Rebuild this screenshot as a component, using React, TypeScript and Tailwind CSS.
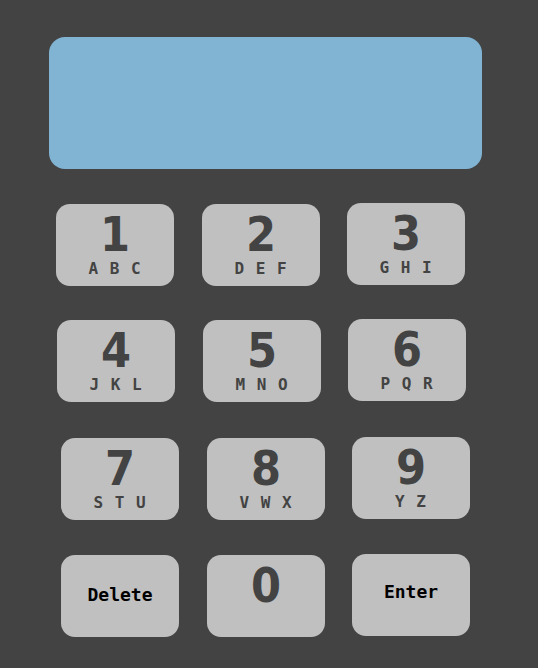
const keys = [
  [
    { digit: '1', letters: 'A B C' },
    { digit: '2', letters: 'D E F' },
    { digit: '3', letters: 'G H I' },
  ],
  [
    { digit: '4', letters: 'J K L' },
    { digit: '5', letters: 'M N O' },
    { digit: '6', letters: 'P Q R' },
  ],
  [
    { digit: '7', letters: 'S T U' },
    { digit: '8', letters: 'V W X' },
    { digit: '9', letters: 'Y Z' },
  ],
];

function Key({ digit, letters, last }: { digit: string; letters?: string; last?: boolean }) {
  return (
    <button
      className={`flex h-[82px] w-[118px] flex-col items-center rounded-[14px] bg-[#c0c0c0] pt-[6px] text-[#434343] ${last ? '-mt-px' : ''}`}
    >
      <span className="font-['DejaVu_Sans',sans-serif] text-[48px] font-bold leading-none font-stretch-condensed">{digit}</span>
      {letters && (
        <span className="mt-[3px] whitespace-pre text-[16px] font-bold leading-none tracking-[1px]">{letters}</span>
      )}
    </button>
  );
}

function ActionKey({ label, last }: { label: string; last?: boolean }) {
  return (
    <button
      className={`flex h-[82px] w-[118px] items-center justify-center rounded-[14px] bg-[#c0c0c0] pb-1 text-[18px] font-bold text-black ${last ? '-mt-px pb-[7px]' : ''}`}
    >
      {label}
    </button>
  );
}

export default function App() {
  return (
    <div className="h-[668px] w-[538px] overflow-hidden bg-[#434343] font-['DejaVu_Sans_Mono',monospace]">
      <div className="ml-[49px] mt-[37px] h-[132px] w-[433px] rounded-[16px] bg-[#81b4d3]" />
      <div className="mt-[35px] flex flex-col">
        <div className="flex items-start pl-[56px]">
          <Key {...keys[0][0]} />
          <div className="ml-[28px]"><Key {...keys[0][1]} /></div>
          <div className="ml-[27px]"><Key {...keys[0][2]} last /></div>
        </div>
        <div className="mt-[34px] flex items-start pl-[57px]">
          <Key {...keys[1][0]} />
          <div className="ml-[28px]"><Key {...keys[1][1]} /></div>
          <div className="ml-[27px]"><Key {...keys[1][2]} last /></div>
        </div>
        <div className="mt-[36px] flex items-start pl-[61px]">
          <Key {...keys[2][0]} />
          <div className="ml-[28px]"><Key {...keys[2][1]} /></div>
          <div className="ml-[27px]"><Key {...keys[2][2]} last /></div>
        </div>
        <div className="mt-[35px] flex items-start pl-[61px]">
          <ActionKey label="Delete" />
          <div className="ml-[28px]"><Key digit="0" /></div>
          <div className="ml-[27px]"><ActionKey label="Enter" last /></div>
        </div>
      </div>
    </div>
  );
}
